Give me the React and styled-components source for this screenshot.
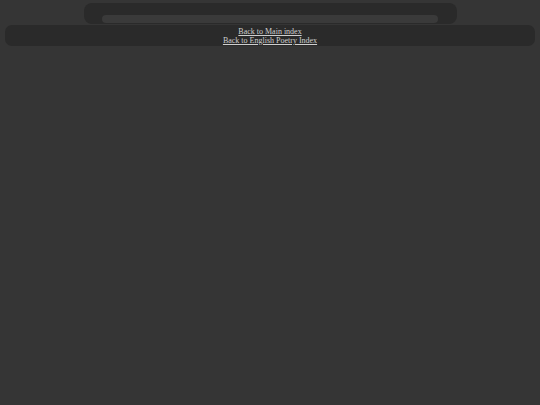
import React from "react";
import styled, { createGlobalStyle } from "styled-components";

const Global = createGlobalStyle`
  html, body {
    margin: 0;
    padding: 0;
    background: #353535;
    min-height: 100%;
  }
  body {
    font-family: "Liberation Serif", "Times New Roman", serif;
  }
`;

const Page = styled.div`
  width: 540px;
  min-height: 405px;
  padding-top: 3px;
  box-sizing: border-box;
  display: flex;
  flex-direction: column;
  align-items: center;
`;

const SearchShelf = styled.div`
  width: 373px;
  height: 21px;
  box-sizing: border-box;
  padding: 12px 19px 1px 18px;
  background: #2a2a2a;
  border-radius: 8px;
  display: flex;
`;

const SearchField = styled.div`
  flex: 1;
  height: 8px;
  border-radius: 4px;
  background: #3a3a3a;
`;

const NavBar = styled.nav`
  align-self: stretch;
  margin: 1px 5px 0;
  height: 21px;
  box-sizing: border-box;
  padding-top: 2px;
  background: #2a2a2a;
  border-radius: 7px;
  display: flex;
  flex-direction: column;
  align-items: center;
`;

const NavLink = styled.a`
  font-size: 8px;
  line-height: 9px;
  color: #cfcfcf;
  text-decoration: underline;
`;

export default function App() {
  return (
    <>
      <Global />
      <Page>
        <SearchShelf>
          <SearchField />
        </SearchShelf>
        <NavBar>
          <NavLink href="#main">Back to Main index</NavLink>
          <NavLink href="#poetry">Back to English Poetry Index</NavLink>
        </NavBar>
      </Page>
    </>
  );
}
